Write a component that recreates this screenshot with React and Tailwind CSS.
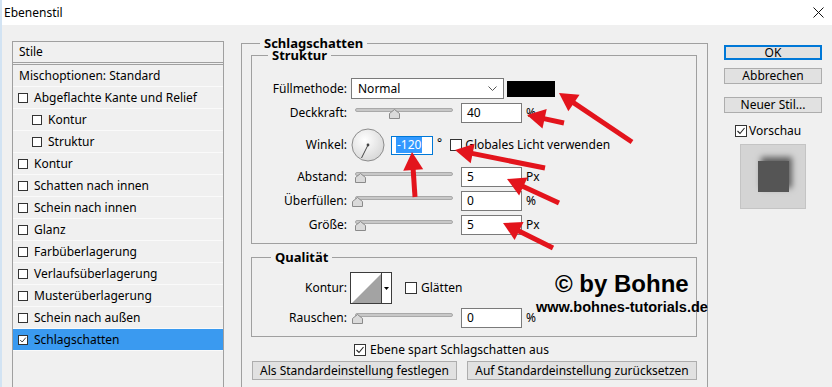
import React from 'react';

const STYLE_ROWS = [
  { label: 'Abgeflachte Kante und Relief' },
  { label: 'Kontur', indent: true },
  { label: 'Struktur', indent: true },
  { label: 'Kontur' },
  { label: 'Schatten nach innen' },
  { label: 'Schein nach innen' },
  { label: 'Glanz' },
  { label: 'Farbüberlagerung' },
  { label: 'Verlaufsüberlagerung' },
  { label: 'Musterüberlagerung' },
  { label: 'Schein nach außen' },
  { label: 'Schlagschatten', checked: true, active: true },
];

const ARROWS = [
  [630, 142, 557, 93],
  [562, 123, 525, 115],
  [543, 168, 453, 150],
  [413, 197, 410, 152],
  [557, 203, 505, 179],
  [551, 248, 501, 223],
];

function Check({ checked, small }) {
  return (
    <span
      className={
        small
          ? 'flex h-[10px] w-[10px] shrink-0 items-center justify-center border border-[#333] bg-white'
          : 'flex h-[12px] w-[12px] shrink-0 items-center justify-center border border-[#333] bg-white'
      }
    >
      {checked && (
        <svg viewBox="0 0 10 10" className="h-full w-full">
          <polyline points="1.5,5 4,7.5 8.5,2" fill="none" stroke="#222" strokeWidth="1.1" />
        </svg>
      )}
    </span>
  );
}

function Label({ children }) {
  return <span className="w-[95px] shrink-0 text-right">{children}</span>;
}

function Slider({ pos = 0 }) {
  return (
    <div className="relative ml-[8px] h-full w-[98px] shrink-0">
      <div className="absolute left-0 right-0 top-[5px] h-[4px] rounded-full border border-[#a9a9a9] bg-[#c8c8c8]" />
      <svg className="absolute top-[6px]" style={{ left: pos }} width="11" height="10" viewBox="0 0 11 10">
        <polygon points="0.5,4.5 5.5,0.5 10.5,4.5 10.5,9.5 0.5,9.5" fill="#dadada" stroke="#8a8a8a" />
      </svg>
    </div>
  );
}

function NumField({ value, unit }) {
  return (
    <>
      <div className="ml-[8px] flex h-[20px] w-[61px] shrink-0 items-center border border-[#7a7a7a] bg-white pl-[5px]">
        {value}
      </div>
      <span className="ml-[4px]">{unit}</span>
    </>
  );
}

function SliderRow({ label, pos, value, unit, className }) {
  return (
    <div className={`flex h-[20px] items-center ${className}`}>
      <Label>{label}</Label>
      <Slider pos={pos} />
      <NumField value={value} unit={unit} />
    </div>
  );
}

function Arrow({ x1, y1, x2, y2 }) {
  const dx = x2 - x1;
  const dy = y2 - y1;
  const len = Math.hypot(dx, dy);
  const ux = dx / len;
  const uy = dy / len;
  const hl = 18;
  const hw = 10;
  const bx = x2 - ux * hl;
  const by = y2 - uy * hl;
  const px = -uy * hw;
  const py = ux * hw;
  return (
    <g>
      <line x1={x1} y1={y1} x2={bx + ux * 2} y2={by + uy * 2} stroke="#e3141c" strokeWidth="5" />
      <polygon points={`${x2},${y2} ${bx + px},${by + py} ${bx - px},${by - py}`} fill="#e3141c" />
    </g>
  );
}

export default function App() {
  return (
    <div className="relative h-[387px] w-[832px] overflow-hidden border-l-2 border-[#d2e3f3] bg-[#f0f0f0] font-['Noto_Sans',sans-serif] text-[12px] leading-[16px] text-black">
      {/* Title bar */}
      <div className="flex h-[25px] items-center justify-between bg-white pl-[2px] pr-[8px]">
        <span className="text-[12px]">Ebenenstil</span>
        <svg width="11" height="11" viewBox="0 0 11 11">
          <path d="M0.5 0.5 L10.5 10.5 M10.5 0.5 L0.5 10.5" stroke="#111" strokeWidth="1" />
        </svg>
      </div>

      <div className="flex items-start">
        {/* Style list */}
        <div className="ml-[10px] mt-[16px] h-[400px] w-[212px] shrink-0 border border-[#a0a0a0]">
          <div className="flex h-[23px] items-center border-b-[3px] border-double border-[#a0a0a0] pl-[6px]">Stile</div>
          <div className="flex h-[22px] items-center border-b border-[#fafafa] pl-[6px]">Mischoptionen: Standard</div>
          {STYLE_ROWS.map((row, i) => (
            <div
              key={i}
              className={`flex h-[22px] items-center border-b border-[#fafafa] ${row.indent ? 'pl-[19px]' : 'pl-[5px]'} ${row.active ? 'bg-[#3a9af0]' : ''}`}
            >
              <Check small checked={row.checked} />
              <span className="ml-[6px]">{row.label}</span>
            </div>
          ))}
        </div>

        {/* Main settings */}
        <fieldset className="ml-[17px] mt-[12px] h-[400px] w-[467px] shrink-0 border border-[#a0a0a0]">
          <legend className="ml-[18px] px-[4px] text-[13px] font-bold leading-[12px]">Schlagschatten</legend>
          <div className="pl-[9px] pr-[10px]">
            <fieldset className="border border-[#a0a0a0] pb-[8px]">
              <legend className="ml-[16px] px-[4px] text-[13px] font-bold leading-[12px]">Struktur</legend>

              <div className="mt-[17px] flex h-[21px] items-center">
                <Label>Füllmethode:</Label>
                <div className="ml-[4px] flex h-[21px] w-[153px] shrink-0 items-center justify-between border border-[#7a7a7a] bg-white pl-[6px] pr-[6px]">
                  <span>Normal</span>
                  <svg width="9" height="5" viewBox="0 0 9 5">
                    <path d="M0.5 0.5 L4.5 4.5 L8.5 0.5" fill="none" stroke="#555" />
                  </svg>
                </div>
                <div className="ml-[3px] h-[16px] w-[48px] bg-black" />
              </div>

              <SliderRow className="mt-[4px]" label="Deckkraft:" pos={34} value="40" unit="%" />

              <div className="mt-[5px] flex h-[34px] items-center">
                <Label>Winkel:</Label>
                <svg className="ml-[4px] shrink-0" width="34" height="34" viewBox="0 0 34 34">
                  <defs>
                    <radialGradient id="dial" cx="40%" cy="35%" r="70%">
                      <stop offset="0%" stopColor="#ffffff" />
                      <stop offset="100%" stopColor="#d6d6d6" />
                    </radialGradient>
                  </defs>
                  <circle cx="17" cy="17" r="16" fill="url(#dial)" stroke="#8c8c8c" />
                  <line x1="17" y1="17" x2="10.5" y2="30" stroke="#444" strokeWidth="1" />
                  <circle cx="17" cy="17" r="1.4" fill="#444" />
                </svg>
                <div className="ml-[6px] flex h-[19px] w-[42px] shrink-0 items-center border border-[#0078d7] bg-white pl-[4px]">
                  <span className="bg-[#3399ff] px-[1px] text-white">-120</span>
                </div>
                <span className="ml-[4px] -mt-[4px]">°</span>
                <span className="ml-[8px]">
                  <Check />
                </span>
                <span className="ml-[3px]">Globales Licht verwenden</span>
              </div>

              <SliderRow className="mt-[5px]" label="Abstand:" pos={0} value="5" unit="Px" />
              <SliderRow className="mt-[4px]" label="Überfüllen:" pos={-3} value="0" unit="%" />
              <SliderRow className="mt-[4px]" label="Größe:" pos={0} value="5" unit="Px" />
            </fieldset>

            <fieldset className="mt-[7px] border border-[#a0a0a0] pb-[8px]">
              <legend className="ml-[19px] px-[4px] text-[13px] font-bold leading-[12px]">Qualität</legend>
              <div className="mt-[9px] flex h-[32px] items-center">
                <Label>Kontur:</Label>
                <div className="ml-[3px] flex h-[32px] w-[42px] shrink-0 border border-[#3c3c3c] bg-white">
                  <svg width="30" height="30" viewBox="0 0 30 30">
                    <polygon points="1,30 30,1 30,30" fill="#a3a3a3" />
                  </svg>
                  <div className="flex flex-1 items-center justify-center border-l border-[#3c3c3c]">
                    <svg width="5" height="3" viewBox="0 0 5 3">
                      <polygon points="0,0 5,0 2.5,3" fill="#000" />
                    </svg>
                  </div>
                </div>
                <span className="ml-[13px]">
                  <Check />
                </span>
                <span className="ml-[4px]">Glätten</span>
              </div>
              <SliderRow className="mt-[4px]" label="Rauschen:" pos={-3} value="0" unit="%" />
            </fieldset>

            <div className="mt-[6px] flex h-[13px] items-center pl-[103px]">
              <Check checked />
              <span className="ml-[4px]">Ebene spart Schlagschatten aus</span>
            </div>

            <div className="mt-[5px] flex gap-[10px] pl-[1px]">
              <button className="flex h-[19px] w-[205px] items-center justify-center border border-[#adadad] bg-[#e1e1e1]">
                Als Standardeinstellung festlegen
              </button>
              <button className="flex h-[19px] w-[230px] items-center justify-center border border-[#adadad] bg-[#e1e1e1]">
                Auf Standardeinstellung zurücksetzen
              </button>
            </div>
          </div>
        </fieldset>

        {/* Right column */}
        <div className="ml-[16px] flex w-[98px] shrink-0 flex-col">
          <button className="mt-[20px] flex h-[15px] items-center justify-center border-2 border-[#0078d7] bg-[#e1e1e1]">OK</button>
          <button className="mt-[8px] flex h-[16px] items-center justify-center border border-[#adadad] bg-[#e1e1e1]">Abbrechen</button>
          <button className="mt-[13px] flex h-[16px] items-center justify-center border border-[#adadad] bg-[#e1e1e1]">Neuer Stil...</button>
          <div className="mt-[12px] ml-[11px] flex h-[12px] items-center">
            <Check checked />
            <span className="ml-[2px]">Vorschau</span>
          </div>
          <div className="ml-[16px] mt-[7px] flex h-[65px] w-[66px] items-center justify-center border border-[#c4c4c4] bg-[#d4d4d4]">
            <div className="h-[31px] w-[31px] bg-[#555] shadow-[3px_-4px_6px_rgba(0,0,0,0.55)]" />
          </div>
        </div>
      </div>

      {/* Watermark */}
      <div className="absolute left-[553px] top-[272px] font-['Liberation_Sans',Arial,sans-serif] text-[24px] font-bold leading-[24px]">
        © by Bohne
      </div>
      <div className="absolute left-[534px] top-[300px] font-['Liberation_Sans',Arial,sans-serif] text-[14.5px] font-bold leading-[14.5px]">
        www.bohnes-tutorials.de
      </div>

      {/* Red annotation arrows */}
      <svg className="pointer-events-none absolute left-0 top-0" width="832" height="387" viewBox="0 0 832 387">
        {ARROWS.map(([x1, y1, x2, y2], i) => (
          <Arrow key={i} x1={x1} y1={y1} x2={x2} y2={y2} />
        ))}
      </svg>
    </div>
  );
}
